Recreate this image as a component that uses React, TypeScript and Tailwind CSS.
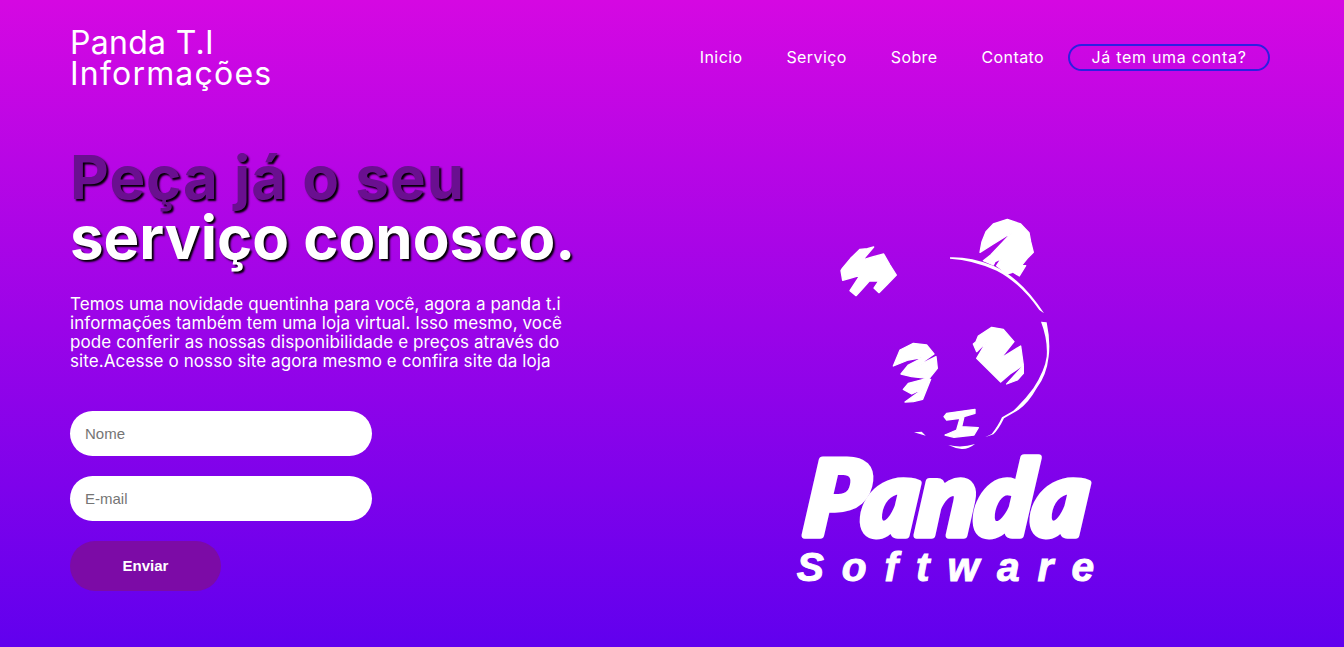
const font = "font-['Inter','Noto_Sans',sans-serif]";

const navLinks = ["Inicio", "Serviço", "Sobre", "Contato"];

// panda mark + wordmark, coordinates traced at 3x of the reference
const PandaLogo = () => (
  <svg viewBox="0 0 1020 1200" width="340" height="400" fill="#fff">
    <g stroke="#fff" strokeWidth="4" strokeLinejoin="round">
      {/* ears */}
      <path d="M183 212 L187 205 L212 175 L240 148 L262 146 L281 141 L248 180 L280 170 L311 162 L330 195 L349 225 L320 255 L297 278 L282 264 L296 243 L268 243 L246 268 L228 287 L210 272 L240 226 L212 234 L188 241 Z" />
      <path d="M600 157 L606 125 L618 95 L640 72 L682 58 L722 72 L747 98 L752 125 L760 157 L742 175 L725 196 L737 197 L718 228 L698 216 L712 204 L695 218 L680 222 L662 206 L650 197 L664 176 L645 185 L640 195 L610 182 L632 165 L696 97 L640 132 Z" />
      {/* eyes */}
      <path d="M580 432 L588 425 L595 408 L635 382 L670 388 L702 425 L662 475 L722 438 L730 495 L690 522 L662 546 L590 475 L620 425 L590 455 Z" />
      <path d="M680 552 L730 497 L730 520 L712 540 Z" />
      <path d="M340 498 L360 450 L400 430 L440 435 L462 462 L408 500 L468 470 L472 505 L440 545 L452 538 L428 598 L400 605 L375 606 L430 566 L395 582 L370 568 L385 550 L442 535 L395 530 L363 522 L385 495 L430 472 L385 480 Z" />
      {/* nose */}
      <path d="M492 650 L500 640 L585 628 L585 640 L552 650 L545 680 L595 683 L582 705 L555 708 L522 712 L495 705 L530 690 L540 655 L500 660 Z" />
    </g>
    {/* head outline */}
    <path d="M510 172 Q570 170 640 197 Q725 235 792 340 L778 330 Q720 248 650 212 Q580 180 510 176 Z" />
    <path d="M783 365 L800 367 Q812 425 806 470 Q800 525 770 565 Q745 610 715 630 L672 655 Q655 690 640 703 L615 712 L635 702 Q652 682 666 652 L700 632 Q735 600 760 565 Q795 510 800 470 Q804 420 783 365 Z" />
    {/* mouth */}
    <path d="M402 697 L425 695 L437 707 Z" />
    <path d="M505 735 Q545 745 585 732 Q565 748 545 747 Q525 745 505 735 Z" />
    {/* wordmark */}
    <text transform="skewX(-6)" x="171" y="1006" textLength="850" lengthAdjust="spacingAndGlyphs" fontFamily="Lato, sans-serif" fontWeight="900" fontStyle="italic" fontSize="310" stroke="#fff" strokeWidth="22" strokeLinejoin="round">Panda</text>
    <text x="50" y="1142" textLength="892" fontFamily="'Liberation Sans', sans-serif" fontWeight="700" fontStyle="italic" fontSize="122" stroke="#fff" strokeWidth="3">Software</text>
  </svg>
);

export default function App() {
  return (
    <div className={`${font} h-[647px] overflow-hidden bg-[linear-gradient(#d508e2,#6100ee)] text-white`}>
      <header className="flex items-center justify-between pl-[70px] pr-[74px] pt-[27px]">
        <div className="text-[32px] leading-[31px] tracking-[0.3px]">
          Panda T.I
          <br />
          <span className="tracking-[1.2px]">Informações</span>
        </div>
        <nav className="-mt-[2px] flex items-center gap-6 text-[16px]">
          <div className="flex gap-[44px] tracking-[0.4px]">
            {navLinks.map((l) => (
              <a key={l}>{l}</a>
            ))}
          </div>
          <a className="flex h-[27px] w-[202px] items-center justify-center rounded-[14px] border-2 border-[#2c1fe2] tracking-[0.7px]">Já tem uma conta?</a>
        </nav>
      </header>
      <main className="flex">
        <section className="w-[556px] shrink-0 pl-[70px] pt-[58px]">
          <h1 className="whitespace-nowrap text-[60px] font-bold leading-[60px] [text-shadow:2px_2px_2px_#000]">
            <span className="tracking-[1px] text-[#6a0f90]">Peça já o seu</span>
            <br />
            serviço conosco.
          </h1>
          <p className="mt-[28px] w-[500px] text-[17px] leading-[19px] tracking-[0.1px]">
            Temos uma novidade quentinha para você, agora a panda t.i informações também tem uma loja virtual. Isso mesmo, você pode conferir as nossas disponibilidade e preços através do site.Acesse o nosso site agora mesmo e confira site da loja
          </p>
          <form className="mt-[40px] flex flex-col items-start gap-5 font-['Liberation_Sans',sans-serif]">
            <input placeholder="Nome" className="h-[45px] w-[302px] rounded-[23px] bg-white px-[15px] text-[15px] text-black placeholder:text-[#757575] outline-none" />
            <input placeholder="E-mail" className="h-[45px] w-[302px] rounded-[23px] bg-white px-[15px] text-[15px] text-black placeholder:text-[#757575] outline-none" />
            <button type="button" className="h-[50px] w-[151px] rounded-[25px] bg-[#7c0ba6] text-[15px] font-bold">Enviar</button>
          </form>
        </section>
        <div className="flex flex-1 justify-center pt-[111px]">
          <PandaLogo />
        </div>
      </main>
    </div>
  );
}
